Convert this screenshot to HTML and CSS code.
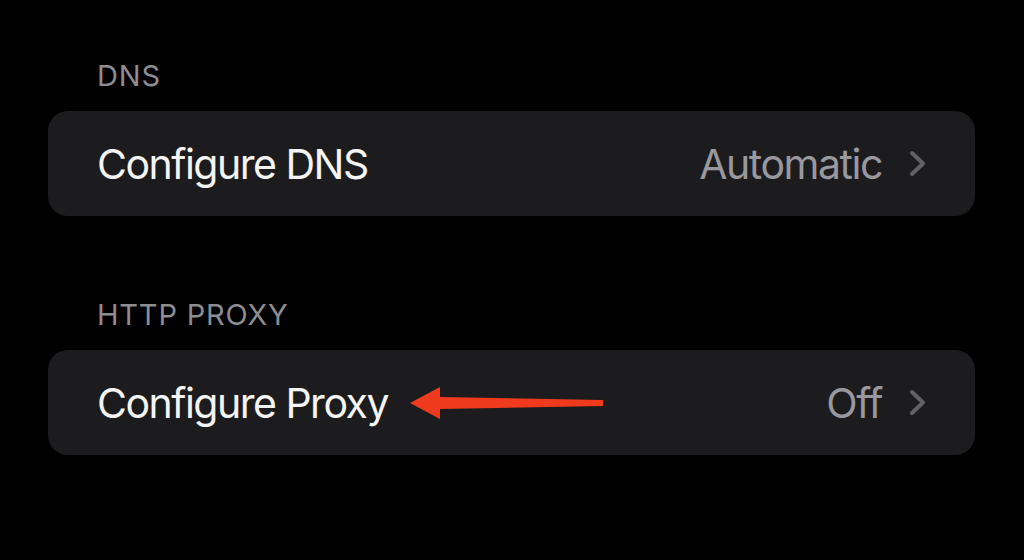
FILE: index.html
```html
<!DOCTYPE html>
<html>
<head>
<meta charset="utf-8">
<link rel="stylesheet" href="styles.css">
</head>
<body>
<main class="page">
  <section class="group">
    <h2 class="group-header">DNS</h2>
    <div class="card">
      <div class="row">
        <span class="row-title">Configure DNS</span>
        <span class="row-value">Automatic</span>
        <svg class="chevron" viewBox="0 0 19 27" width="19" height="27"><path d="M4 3 L15 13.5 L4 24" fill="none" stroke="#616166" stroke-width="4" stroke-linecap="round" stroke-linejoin="round"/></svg>
      </div>
    </div>
  </section>
  <section class="group">
    <h2 class="group-header">HTTP PROXY</h2>
    <div class="card">
      <div class="row">
        <span class="row-title">Configure Proxy</span>
        <span class="row-value">Off</span>
        <svg class="chevron" viewBox="0 0 19 27" width="19" height="27"><path d="M4 3 L15 13.5 L4 24" fill="none" stroke="#616166" stroke-width="4" stroke-linecap="round" stroke-linejoin="round"/></svg>
        <svg class="arrow" viewBox="0 0 200 40" width="200" height="40"><polygon points="2,20 32,4 32,14 195,17 195,23 32,26 32,36" fill="#ef3a1d"/></svg>
      </div>
    </div>
  </section>
</main>
</body>
</html>
```

FILE: styles.css
```css
html, body {
  margin: 0;
  padding: 0;
  background: #000;
}
body {
  width: 1024px;
  height: 560px;
  overflow: hidden;
  font-family: "Inter", "Noto Sans", sans-serif;
}
.page {
  padding: 58px 49px 0 48px;
  display: flex;
  flex-direction: column;
  gap: 81px;
}
.group {
  display: flex;
  flex-direction: column;
}
.group-header {
  margin: 0 0 17px 0;
  padding-left: 49px;
  font-size: 29px;
  line-height: 36px;
  font-weight: 400;
  color: #8d8d92;
  letter-spacing: 0.8px;
}
.card {
  background: #1c1c1e;
  border-radius: 20px;
  height: 105px;
  display: flex;
  align-items: center;
}
.row {
  position: relative;
  flex: 1;
  display: flex;
  align-items: center;
  padding: 0 48px 0 49px;
}
.row-title {
  flex: 1;
  font-size: 41px;
  color: #f4f4f5;
  letter-spacing: -1.5px;
}
.row-value {
  font-size: 41px;
  color: #98989e;
  letter-spacing: -1.45px;
  margin-right: 26px;
}
.chevron {
  display: block;
}
.arrow {
  position: absolute;
  left: 360px;
  top: 50%;
  transform: translateY(-50%);
}
```
